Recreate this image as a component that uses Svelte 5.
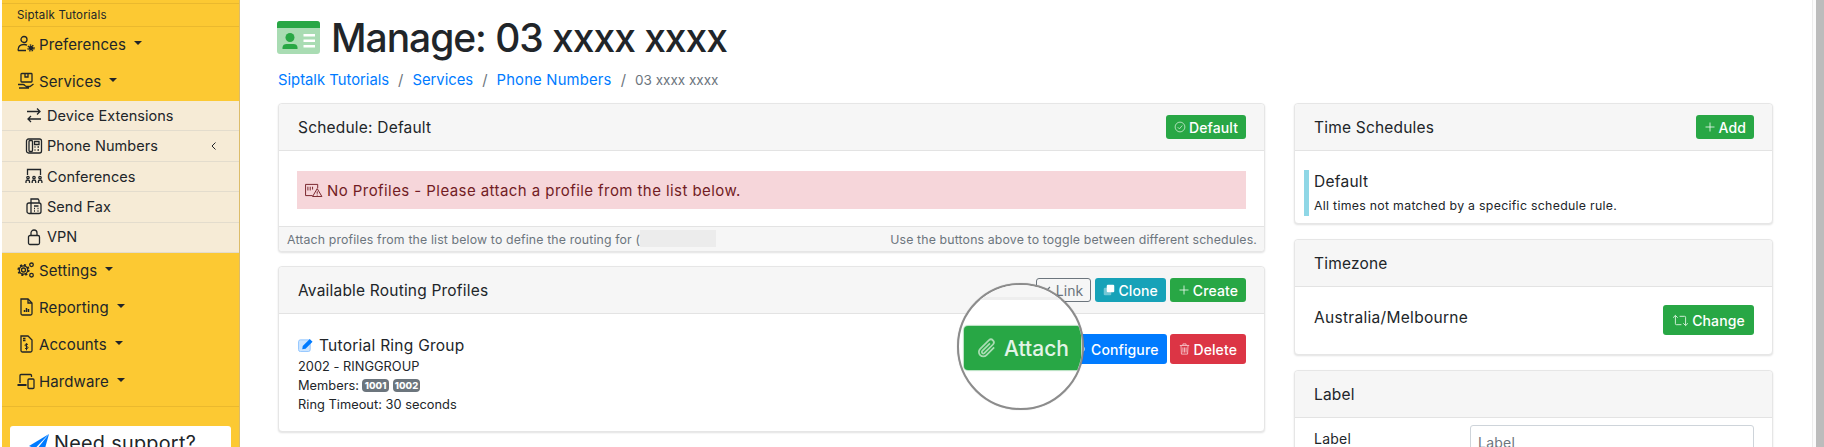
<script>
  const subs = [
    ['Device Extensions', 'ex'],
    ['Phone Numbers', 'ph'],
    ['Conferences', 'co'],
    ['Send Fax', 'fa'],
    ['VPN', 'lo']
  ];
</script>

{#snippet subIcon(k)}
  <svg class="subic" viewBox="0 0 18 18" fill="none" stroke="#212529" stroke-width="1.3">
    {#if k === 'ex'}
      <path d="M2 6.5h13M12 3.5l3 3-3 3" transform="translate(0 -1)"/><path d="M16 12H3M6 9l-3 3 3 3" transform="translate(0 1)"/>
    {:else if k === 'ph'}
      <rect x="1.5" y="2" width="15" height="14" rx="2"/><rect x="4" y="3.5" width="3.5" height="11" rx="1"/><path d="M9.5 4.5h4.5v3H9.500zM9.500 10h1M12.500 10h1.500M9.500 13h1M12.500 13h1.500"/>
    {:else if k === 'co'}
      <path d="M2.500 8V2.500h13V8"/><path d="M1 16v-1.500c0-2 3.500-2 3.500 0V16M7.200 16v-1.500c0-2 3.500-2 3.500 0V16M13.400 16v-1.500c0-2 3.500-2 3.500 0V16"/><circle cx="3" cy="10.500" r="1.200"/><circle cx="9" cy="10.500" r="1.200"/><circle cx="15" cy="10.500" r="1.200"/>
    {:else if k === 'fa'}
      <rect x="2" y="6" width="14" height="10.500" rx="2"/><path d="M6 6V2h7l1 1.500V6"/><path d="M6 6v10.500"/><path d="M9 9h4.500M9 11.500h1M12.500 11.500h1M9 14h1M12.500 14h1"/>
    {:else}
      <rect x="3.500" y="7.500" width="11" height="9" rx="1.500"/><path d="M6 7.500V5a3 3 0 016 0v2.500"/>
    {/if}
  </svg>
{/snippet}

{#snippet caret()}
  <span class="caret"></span>
{/snippet}

<div class="page">
  <aside class="side">
    <div class="band"></div>
    <div class="org">Siptalk Tutorials</div>
    <div class="item">
      <svg class="ic" viewBox="0 0 18 18" fill="none" stroke="#212529" stroke-width="1.300"><circle cx="7" cy="4.500" r="3"/><path d="M1 15.500c0-5 3-6 6-6 1.500 0 2.500.3 3 .7M1 15.500h8"/><circle cx="14" cy="13" r="2.300" fill="#212529" stroke="none"/><circle cx="14" cy="13" r="3" fill="none" stroke="#212529" stroke-dasharray="1.500 1"/></svg>
      <span>Preferences</span>{@render caret()}
    </div>
    <div class="item">
      <svg class="ic" viewBox="0 0 18 18" fill="none" stroke="#212529" stroke-width="1.300"><rect x="4" y="1.500" width="11" height="8.500" rx=".8"/><path d="M8 1.500v3.500h3V1.500" /><path d="M1 12.500h5c2 0 2 2 3.500 2H13l3.500-2.500M2 16h10"/></svg>
      <span>Services</span>{@render caret()}
    </div>
    <div class="sub">
      {#each subs as [label, k]}
        <div class="row">
          {@render subIcon(k)}
          <span>{label}</span>
          {#if k === 'ph'}<svg class="chev" viewBox="0 0 8 10" fill="none" stroke="#212529" stroke-width="1"><path d="M5.500 1.500L2 5l3.500 3.500"/></svg>{/if}
        </div>
      {/each}
    </div>
    <div class="item">
      <svg class="ic" viewBox="0 0 18 18" fill="none" stroke="#212529" stroke-width="1.300"><circle cx="6.500" cy="9" r="2"/><circle cx="6.500" cy="9" r="5" stroke-width="2.200" stroke-dasharray="2 1.900"/><circle cx="6.500" cy="9" r="4.200"/><circle cx="14.500" cy="3.800" r="1.800"/><circle cx="14.500" cy="14.200" r="1.800"/></svg>
      <span>Settings</span>{@render caret()}
    </div>
    <div class="item">
      <svg class="ic" viewBox="0 0 18 18" fill="none" stroke="#212529" stroke-width="1.300"><path d="M4 1h7l4 4v10.500a1.500 1.500 0 01-1.500 1.500h-8A1.500 1.500 0 014 15.500z"/><path d="M11 1v4h4"/><path d="M7.500 14v-2M9.500 14v-4M11.500 14v-3" stroke-width="1.500"/></svg>
      <span>Reporting</span>{@render caret()}
    </div>
    <div class="item">
      <svg class="ic" viewBox="0 0 18 18" fill="none" stroke="#212529" stroke-width="1.300"><path d="M4 1h7l4 4v10.500a1.500 1.500 0 01-1.500 1.500h-8A1.500 1.500 0 014 15.500z"/><path d="M6 3.500h2.500M6 5.500h2.500"/><path d="M11 9.500c-1.800-1-3-.2-3 .7 0 1.600 3 .8 3 2.400 0 1-1.200 1.600-3 .7M9.500 8.300v7" stroke-width="1"/></svg>
      <span>Accounts</span>{@render caret()}
    </div>
    <div class="item">
      <svg class="ic" viewBox="0 0 18 18" fill="none" stroke="#212529" stroke-width="1.300"><path d="M3 11V3.500A1 1 0 014 2.500h9.500a1 1 0 011 1V5"/><path d="M.5 13h9" stroke-width="2"/><rect x="11" y="7" width="6" height="9.500" rx="1"/></svg>
      <span>Hardware</span>{@render caret()}
    </div>
    <div class="rule"></div>
    <div class="support">
      <svg class="plane" viewBox="0 0 20 20"><path d="M20 0L0 12l6 2.500L20 0z" fill="#007bff"/><path d="M20 0L8 15l7 3z" fill="#007bff"/><path d="M6 14.500V20l3-3.500z" fill="#0062cc"/></svg>
      <span>Need support?</span>
    </div>
  </aside>

  <main class="main">
    <h1 class="title">
      <svg class="idcard" viewBox="0 0 43 33">
        <rect width="43" height="33" rx="3" fill="#a9dcb3"/>
        <path d="M0 7V3a3 3 0 013-3h37a3 3 0 013 3v4z" fill="#28a745"/>
        <circle cx="13" cy="16.500" r="4.500" fill="#28a745"/>
        <path d="M5.500 28v-1.500c0-2.500 2-3.500 4-3.500h7c2 0 4 1 4 3.500V28z" fill="#28a745"/>
        <path d="M26.500 13h11.500v2.500H26.500zM26.500 18.500h11.500V21H26.500zM26.500 24h11.500v2.500H26.500z" fill="#fff"/>
      </svg>
      <span>Manage: 03 xxxx xxxx</span>
    </h1>
    <nav class="crumbs">
      <a href="#a">Siptalk Tutorials</a><i>/</i><a href="#b">Services</a><i>/</i><a href="#c">Phone Numbers</a><i>/</i><em>03 xxxx xxxx</em>
    </nav>

    <div class="grid">
      <div class="col">
        <section class="card">
          <header class="head">
            <span>Schedule: Default</span>
            <div class="btns">
              <button class="btn green">
                <svg class="bi" viewBox="0 0 16 16" fill="none" stroke="#d9f2de" stroke-width="1"><circle cx="8" cy="8" r="6.500"/><path d="M5 8.300l2.200 2.200L11 6"/></svg>Default
              </button>
            </div>
          </header>
          <div class="body alertwrap">
            <div class="alert">
              <svg class="ai" viewBox="0 0 20 15" fill="none" stroke="#721c24" stroke-width="1"><path d="M9 13.500H1.500v-12h13v4"/><path d="M4 4v4M6.500 4v4M9 4v3"/><path d="M14 6l5 8.500H9z"/><path d="M14 9v2.500M14 12.500v1"/></svg>
              <span>No Profiles - Please attach a profile from the list below.</span>
            </div>
          </div>
          <footer class="foot">
            <span class="ftl">Attach profiles from the list below to define the routing for (<b class="redact"></b></span>
            <span>Use the buttons above to toggle between different schedules.</span>
          </footer>
        </section>

        <section class="card">
          <header class="head">
            <span>Available Routing Profiles</span>
            <div class="btns">
              <button class="btn outline">
                <svg class="bi" viewBox="0 0 16 16" fill="none" stroke="#6c757d" stroke-width="1.500"><path d="M7 9l5-5M6 7a3 3 0 103 3"/></svg>Link
              </button>
              <button class="btn teal">
                <svg class="bi" viewBox="0 0 16 16"><rect x="1" y="5" width="10" height="10" rx="1.500" fill="#74c7d5"/><rect x="5" y="1" width="10" height="10" rx="1.500" fill="#fff"/></svg>Clone
              </button>
              <button class="btn green">
                <svg class="bi" viewBox="0 0 16 16" fill="none" stroke="#fff" stroke-width="1"><path d="M8 2v12M2 8h12"/></svg>Create
              </button>
            </div>
          </header>
          <div class="body profile">
            <div class="info">
              <div class="pname">
                <svg class="pen" viewBox="0 0 17 15"><rect x=".5" y="2" width="12.500" height="12.500" rx="2" fill="#cce5ff" stroke="#8fc4ff"/><path d="M5 8.500L12.500 1l3 3L8 11.500l-3.500.5z" fill="#007bff"/></svg>
                <span>Tutorial Ring Group</span>
              </div>
              <div class="meta">2002 - RINGGROUP</div>
              <div class="meta">Members:<b class="badge">1001</b><b class="badge">1002</b></div>
              <div class="meta">Ring Timeout: 30 seconds</div>
            </div>
            <div class="btns rowbtns">
              <button class="btn blue big">
                <svg class="bi" viewBox="0 0 16 16" fill="none" stroke="#cce5ff" stroke-width="1.500"><circle cx="8" cy="8" r="3"/></svg>Configure
              </button>
              <button class="btn red big">
                <svg class="bi trash" viewBox="0 0 14 16" fill="none" stroke="#f8d7da" stroke-width="1"><path d="M1 3.500h12M5 3.500V1.500h4v2M2.500 3.500l.6 11h7.800l.6-11M5 6v6.500M7 6v6.500M9 6v6.500"/></svg>Delete
              </button>
            </div>
          </div>
          <div class="lens">
            <div class="lens-top"></div>
            <div class="lens-btn">
              <svg class="clip" viewBox="0 0 20 20" fill="none" stroke="#a9dcb3" stroke-width="1.600"><path d="M16.500 9.500l-7 7a4 4 0 01-5.700-5.700l8-8a2.700 2.700 0 013.800 3.800l-8 8a1.300 1.300 0 01-1.900-1.900l7-7"/></svg>
              <span>Attach</span>
            </div>
          </div>
        </section>
      </div>

      <div class="col">
        <section class="card">
          <header class="head">
            <span>Time Schedules</span>
            <div class="btns">
              <button class="btn green">
                <svg class="bi" viewBox="0 0 16 16" fill="none" stroke="#fff" stroke-width="1"><path d="M8 2v12M2 8h12"/></svg>Add
              </button>
            </div>
          </header>
          <div class="body sched">
            <div class="schedrow">
              <div class="sname">Default</div>
              <div class="sdesc">All times not matched by a specific schedule rule.</div>
            </div>
          </div>
        </section>

        <section class="card">
          <header class="head"><span>Timezone</span></header>
          <div class="body tz">
            <span>Australia/Melbourne</span>
            <button class="btn green big">
              <svg class="bi wide" viewBox="0 0 18 14" fill="none" stroke="#d9f2de" stroke-width="1"><path d="M1 4l2.500-2.500L6 4M3.500 1.500V10.500a1 1 0 001 1H10M17 10l-2.500 2.500L12 10M14.500 12.500V3.500a1 1 0 00-1-1H8"/></svg>Change
            </button>
          </div>
        </section>

        <section class="card">
          <header class="head"><span>Label</span></header>
          <div class="body lbl">
            <label for="lb">Label</label>
            <input id="lb" placeholder="Label" />
          </div>
        </section>
      </div>
    </div>
  </main>

  <div class="scroll"><div class="thumb"></div></div>
</div>

<style>
  :global(body) { margin: 0; background: #fff; }
  .page {
    display: flex;
    width: 1824px;
    height: 447px;
    overflow: hidden;
    background: #fff;
    color: #212529;
    font-family: Inter, "Noto Sans", sans-serif;
    font-size: 14px;
  }
  .side {
    flex: 0 0 238px;
    margin-left: 2px;
    background: #fcc933;
    border-right: 1px solid #dcbc6a;
    box-sizing: border-box;
    width: 238px;
  }
  .band { height: 3px; border-bottom: 1px solid #eab92e; }
  .org {
    padding-left: 15px;
    display: flex;
    align-items: center;
    font-size: 11.5px;
    letter-spacing: .2px;
    border-bottom: 1px solid #eab92e;
    box-sizing: border-box;
    height: 23px;
  }
  .item {
    height: 37px;
    display: flex;
    align-items: center;
    padding-left: 15px;
    font-size: 15px;
    letter-spacing: .1px;
    box-sizing: border-box;
    padding-bottom: 3px;
  }
  .ic { width: 18px; height: 18px; margin-right: 4px; flex: none; }
  .caret {
    margin-left: 8px;
    margin-bottom: 3px;
    width: 0; height: 0;
    border-left: 4.500px solid transparent;
    border-right: 4.500px solid transparent;
    border-top: 4.500px solid #212529;
  }
  .sub { background: #f6ebd6; height: 152px; display: flex; flex-direction: column; }
  .row {
    flex: 1;
    display: flex;
    align-items: center;
    padding-left: 23px;
    padding-bottom: 1px;
    font-size: 14.500px;
    letter-spacing: .05px;
    border-bottom: 1px solid #e3dccd;
    box-sizing: border-box;
    position: relative;
  }
  .subic { width: 18px; height: 18px; margin-right: 4px; flex: none; }
  .chev { width: 8px; height: 10px; margin-left: auto; margin-right: 21px; }
  .rule { height: 1px; background: #eab92e; margin-top: 5px; }
  .support {
    margin: 19px 8px 0;
    height: 60px;
    background: #fff;
    border-radius: 3px;
    display: flex;
    align-items: flex-start;
    padding-left: 19px;
    padding-top: 5px;
    font-size: 19.800px;
    letter-spacing: .3px;
    gap: 5px;
  }
  .plane { width: 20px; height: 20px; margin-top: 3px; flex: none; }

  .main { flex: 1; padding: 16px 39px 0 38px; box-sizing: border-box; min-width: 0; }
  .title {
    margin: 0 0 0 -1px;
    height: 42px;
    display: flex;
    align-items: center;
    gap: 11px;
    font-size: 39px;
    font-weight: 500;
    letter-spacing: -1.05px;
    white-space: nowrap;
  }
  .idcard { width: 43px; height: 33px; flex: none; }
  .crumbs {
    margin: 13px 0 0 0;
    height: 18px;
    display: flex;
    align-items: center;
    font-size: 14.800px;
  }
  .crumbs a { color: #007bff; text-decoration: none; }
  .crumbs a:nth-of-type(3) { letter-spacing: .2px; }
  .crumbs i { color: #6c757d; font-style: normal; margin: 0 9px; }
  .crumbs em { color: #6c757d; font-style: normal; font-size: 13.500px; }
  .grid {
    margin-top: 14px;
    display: grid;
    grid-template-columns: 987px 479px;
    gap: 29px;
  }
  .col { display: flex; flex-direction: column; gap: 15px; }
  .col:first-child { gap: 14px; }
  .card {
    position: relative;
    background: #fff;
    border: 1px solid #e6e6e6;
    border-radius: 4px;
    box-shadow: 0 1px 2px rgba(0,0,0,.12);
    box-sizing: border-box;
    flex: none;
  }
  .head {
    height: 47px;
    background: #f6f6f6;
    border-bottom: 1px solid #e3e3e3;
    border-radius: 4px 4px 0 0;
    display: flex;
    align-items: center;
    justify-content: space-between;
    padding: 0 18px 0 19px;
    box-sizing: border-box;
    font-size: 15.500px;
    letter-spacing: .2px;
  }
  .btns { display: flex; gap: 4px; }
  .btn {
    height: 24px;
    border: 1px solid transparent;
    border-radius: 3px;
    padding: 0 7px;
    display: inline-flex;
    align-items: center;
    gap: 3px;
    font: inherit;
    font-size: 14px;
    font-weight: 500;
    letter-spacing: .1px;
    color: #fff;
    box-sizing: border-box;
    white-space: nowrap;
  }
  .bi { width: 12px; height: 12px; flex: none; }
  .bi.wide { width: 17px; height: 13px; }
  .bi.trash { width: 11px; height: 14px; }
  .green { background: #28a745; }
  .teal { background: #17a2b8; }
  .blue { background: #007bff; }
  .red { background: #dc3545; }
  .outline { border-color: #6c757d; background: #f6f6f6; color: #6c757d; font-weight: 400; width: 55px; justify-content: flex-end; }
  .big { height: 30px; padding: 0 8px; font-size: 14px; }

  .alertwrap { padding: 20px 18px 17px; height: 75px; box-sizing: border-box; }
  .alert {
    background: #f6d6da;
    color: #721c24;
    height: 38px;
    display: flex;
    align-items: center;
    padding-left: 7px;
    font-size: 15px;
    gap: 4px;
    letter-spacing: .43px;
  }
  .ai { width: 19px; height: 14px; flex: none; }
  .foot {
    height: 25px;
    background: #f6f6f6;
    border-top: 1px solid #e3e3e3;
    display: flex;
    align-items: center;
    justify-content: space-between;
    padding: 0 7px 0 8px;
    font-size: 12.300px;
    letter-spacing: .15px;
    color: #6c757d;
    border-radius: 0 0 4px 4px;
    box-sizing: border-box;
  }
  .ftl { display: flex; align-items: center; }
  .redact { display: block; width: 76px; height: 17px; background: #ececec; margin-top: -2px; }

  .profile {
    height: 117px;
    box-sizing: border-box;
    padding: 20px 18px 0 19px;
    display: flex;
    justify-content: space-between;
    align-items: flex-start;
  }
  .pname { display: flex; align-items: center; gap: 5px; font-size: 15.500px; height: 24px; margin-top: -1px; letter-spacing: .25px; }
  .pen { width: 16px; height: 14px; flex: none; }
  .meta { font-size: 12.800px; height: 19px; line-height: 19px; letter-spacing: .03px; display: flex; align-items: center; white-space: pre; }
  .badge {
    display: inline-block;
    background: #6c757d;
    color: #fff;
    font-size: 9.500px;
    font-weight: 800;
    line-height: 13px;
    height: 13px;
    padding: 0;
    border-radius: 4px;
    margin-left: 3px;
    width: 27px;
    box-sizing: border-box;
    text-align: center;
  }
  .badge + .badge { margin-left: 4px; }
  .rowbtns { gap: 3px; }
  .rowbtns .blue { padding-left: 79px; }

  .lens {
    position: absolute;
    left: 678px;
    top: 16px;
    width: 127px;
    height: 127px;
    border-radius: 50%;
    border: 2px solid #8c8c8c;
    background: #fff;
    box-sizing: border-box;
    overflow: hidden;
    z-index: 2;
    box-shadow: 0 0 1px rgba(0,0,0,.3);
  }
  .lens-top { height: 12px; background: #f6f6f6; border-bottom: 3px solid #eee; }
  .lens-btn {
    position: absolute;
    left: 5px;
    top: 41px;
    width: 117px;
    height: 44px;
    background: #28a745;
    border-radius: 4px;
    box-shadow: 0 0 1px 1px rgba(40,167,69,.35);
    display: flex;
    align-items: center;
    justify-content: center;
    gap: 6px;
    color: #e3f4e7;
    font-size: 21px;
    font-weight: 500;
  }
  .clip { width: 22px; height: 22px; flex: none; }

  .sched { padding: 19px 0 0 9px; height: 72px; box-sizing: border-box; }
  .schedrow { border-left: 5px solid #8fd7e6; padding-left: 5px; height: 46px; box-sizing: border-box; }
  .sname { font-size: 15.500px; height: 23px; line-height: 24px; letter-spacing: .25px; }
  .sdesc { font-size: 12.300px; line-height: 25px; height: 23px; letter-spacing: .3px; white-space: nowrap; }
  .tz {
    height: 67px;
    box-sizing: border-box;
    padding: 0 18px 0 19px;
    display: flex;
    align-items: flex-start;
    justify-content: space-between;
    font-size: 15.500px;
    letter-spacing: .3px;
  }
  .tz span { margin-top: 21px; }
  .tz .btn { margin-top: 18px; width: 91px; justify-content: center; }
  .lbl { padding: 7px 18px 0 19px; display: flex; height: 60px; box-sizing: border-box; font-size: 14px; align-items: flex-start; }
  .lbl label { width: 156px; margin-top: 5px; letter-spacing: .25px; }
  .lbl input {
    width: 284px;
    height: 34px;
    border: 1px solid #ced4da;
    border-radius: 3px;
    padding: 0 7px;
    box-sizing: border-box;
    font: inherit;
    letter-spacing: .25px;
    flex: none;
  }
  .lbl input::placeholder { color: #6c757d; }
  .scroll {
    flex: 0 0 12px;
    border-left: 1px solid #ececec;
    padding-left: 3px;
    box-sizing: border-box;
    background: #fbfbfb;
  }
  .thumb { height: 100%; background: #bcbcbc; }
</style>
